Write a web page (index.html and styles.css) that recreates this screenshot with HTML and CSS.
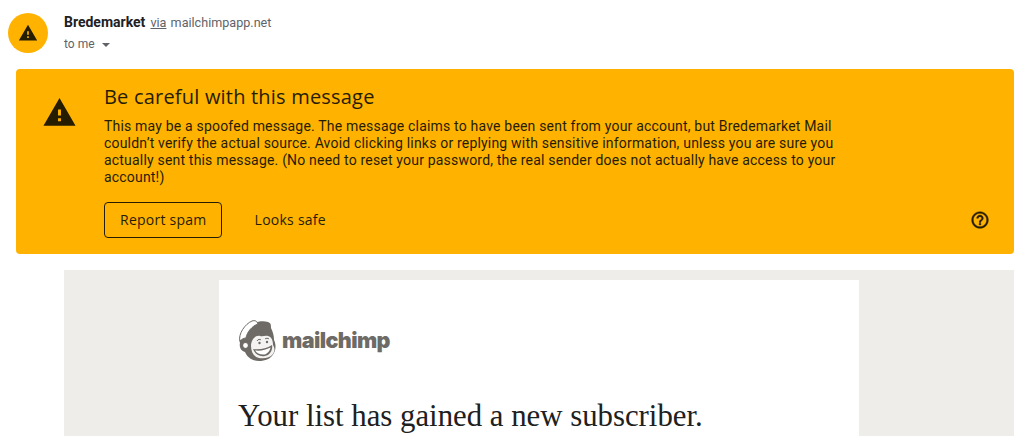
FILE: index.html
```html
<!DOCTYPE html>
<html lang="en">
<head>
<meta charset="utf-8">
<title>Be careful with this message</title>
<link rel="stylesheet" href="styles.css">
</head>
<body>
<header class="head">
  <div class="avatar">
    <svg width="20" height="20" viewBox="0 0 24 24"><path class="warn" d="M1 21h22L12 2 1 21zm12-3h-2v-2h2v2zm0-4h-2v-4h2v4z"/></svg>
  </div>
  <div class="sender">
    <div class="from"><b class="name">Bredemarket</b> <u class="via">via</u> mailchimpapp.net</div>
    <div class="to">to me <span class="caret"></span></div>
  </div>
</header>
<section class="banner">
  <svg class="banner-icon" width="35" height="35" viewBox="0 0 24 24"><path class="warn" d="M1 21h22L12 2 1 21zm12-3h-2v-2h2v2zm0-4h-2v-4h2v4z"/></svg>
  <div class="banner-body">
    <h2 class="title">Be careful with this message</h2>
    <p class="desc">This may be a spoofed message. The message claims to have been sent from your account, but Bredemarket Mail couldn’t verify the actual source. Avoid clicking links or replying with sensitive information, unless you are sure you actually sent this message. (No need to reset your password, the real sender does not actually have access to your account!)</p>
    <div class="actions">
      <button class="btn outlined">Report spam</button>
      <button class="btn">Looks safe</button>
      <svg class="help" width="20" height="20" viewBox="0 0 24 24"><path class="warn help-path" d="M11 18h2v-2h-2v2zm1-16C6.48 2 2 6.48 2 12s4.48 10 10 10 10-4.480 10-10S17.520 2 12 2zm0 18c-4.410 0-8-3.590-8-8s3.590-8 8-8 8 3.590 8 8-3.590 8-8 8zm0-14c-2.210 0-4 1.790-4 4h2c0-1.100.9-2 2-2s2 .9 2 2c0 2-3 1.750-3 5h2c0-2.250 3-2.500 3-5 0-2.210-1.790-4-4-4z"/></svg>
    </div>
  </div>
</section>
<main class="mail">
  <article class="card">
    <div class="logo">
      <svg width="38" height="42" viewBox="0 0 38 42">
        <path class="mk-dark" d="M8 8C14 2 24 0 30 2c3 1 3 3 3 6 2 4 3 8 3 12 2 4 2 9 0 13-3 6-9 8-15 8-7 0-12-4-14-9-4-1-6-5-5-9C0 18 3 12 8 8z"/>
        <path class="mk-cap" d="M2 21C0 14 7 4 14 1c3-1 5 0 6 3-6 2-11 8-12 14-2 0-4 1-6 3z"/>
        <path class="mk-face" d="M13 26c0-6 4-11 9-10 3 1 5-1 8 0 4 1 5 5 5 9 2 3 2 6 0 9-3 4-9 5-14 4-5-1-8-6-8-12z"/>
        <path class="mk-mouth" d="M15 29c6 1 13 0 19-4 1 5-2 10-7 11-6 1-10-2-12-7z"/>
        <path class="mk-teeth" d="M17 30.500c6 .5 11-.5 15.500-3-.5 3-3 6.500-6 7-4 .5-7.500-1-9.500-4z"/>
        <path class="mk-brow" d="M19 21c1-2 3-2 4-1M27 19c1-1 3-1 4 0"/>
        <circle class="mk-dark" cx="21.500" cy="23" r="1.200"/>
        <circle class="mk-dark" cx="29" cy="22" r="1.200"/>
        <circle class="mk-ear" cx="7.500" cy="25.500" r="3"/>
      </svg>
      <span class="wordmark">mailchimp</span>
    </div>
    <h1 class="headline">Your list has gained a new subscriber.</h1>
  </article>
</main>
</body>
</html>
```

FILE: styles.css
```css
html, body {
  margin: 0;
  padding: 0;
  height: 436px;
  overflow: hidden;
  background: #fff;
}
body {
  font-family: Roboto, "Liberation Sans", sans-serif;
  color: #202124;
}
.warn { fill: #261c00; }
.help-path { stroke: #261c00; stroke-width: 0.5; }
.head {
  display: flex;
  gap: 16px;
  padding: 12px 0 0 8px;
  height: 69px;
  box-sizing: border-box;
}
.avatar {
  width: 40px;
  height: 40px;
  margin-top: 1px;
  border-radius: 50%;
  background: #ffb300;
  display: flex;
  align-items: center;
  justify-content: center;
}
.from {
  font-size: 12.6px;
  line-height: 20px;
  color: #5f6368;
}
.name {
  font-size: 14px;
  font-weight: 700;
  color: #202124;
  margin-right: 2px;
}
.via {
  color: #5f6368;
  margin-right: 1px;
}
.to {
  margin-top: 1px;
  font-size: 12px;
  letter-spacing: 0.05px;
  line-height: 20px;
  color: #5f6368;
}
.caret {
  display: inline-block;
  width: 0;
  height: 0;
  margin-left: 4px;
  vertical-align: middle;
  border-left: 4px solid transparent;
  border-right: 4px solid transparent;
  border-top: 4px solid #5f6368;
}
.banner {
  margin: 0 8px 16px 16px;
  height: 185px;
  box-sizing: border-box;
  background: #ffb300;
  border-radius: 4px;
  display: flex;
  padding: 18px 0 0 26px;
  gap: 27px;
}
.banner-icon { flex: none; margin-top: 8px; }
.banner-body { flex: 1; }
.title {
  margin: 0;
  font-family: "Open Sans", Roboto, sans-serif;
  font-size: 20px;
  font-weight: 500;
  letter-spacing: 0.2px;
  line-height: 20px;
  color: #261c00;
}
.desc {
  margin: 11px 0 0;
  width: 745px;
  font-size: 14px;
  letter-spacing: 0.19px;
  line-height: 17px;
  color: #261c00;
}
.actions {
  display: flex;
  align-items: center;
  margin-top: 16px;
  padding-right: 24px;
}
.btn {
  font-family: "Open Sans", Roboto, sans-serif;
  font-size: 14px;
  font-weight: 500;
  letter-spacing: 0.25px;
  color: #261c00;
  background: none;
  border: 1px solid transparent;
  border-radius: 4px;
  height: 36px;
  padding: 0 14px 1px 15px;
  margin-right: 17px;
}
.outlined { border-color: #261c00; }
.help { margin-left: auto; }
.mail {
  margin: 0 8px 0 64px;
  height: 166px;
  background: #eeedea;
  padding-top: 10px;
  box-sizing: border-box;
}
.card {
  width: 640px;
  margin: 0 auto;
  height: 156px;
  box-sizing: border-box;
  background: #fff;
  padding: 40px 19px 0;
}
.logo {
  display: flex;
  align-items: center;
  gap: 6px;
  height: 42px;
}
.wordmark {
  margin-bottom: 3px;
  font-family: Inter, Roboto, sans-serif;
  font-size: 21.5px;
  font-weight: 900;
  letter-spacing: -0.6px;
  color: #6e6b67;
}
.mk-dark { fill: #6e6b67; }
.mk-cap { fill: #ffffff; stroke: #6e6b67; stroke-width: 1; }
.mk-face { fill: #f4f3f1; }
.mk-mouth { fill: #6e6b67; }
.mk-teeth { fill: #ffffff; }
.mk-brow { fill: none; stroke: #6e6b67; stroke-width: 1; }
.mk-ear { fill: #ffffff; stroke: #6e6b67; stroke-width: 1.2; }
.headline {
  margin: 36px 0 0;
  font-family: "Liberation Serif", serif;
  font-size: 30.800px;
  font-weight: 400;
  line-height: 36px;
  color: #202020;
}
```
